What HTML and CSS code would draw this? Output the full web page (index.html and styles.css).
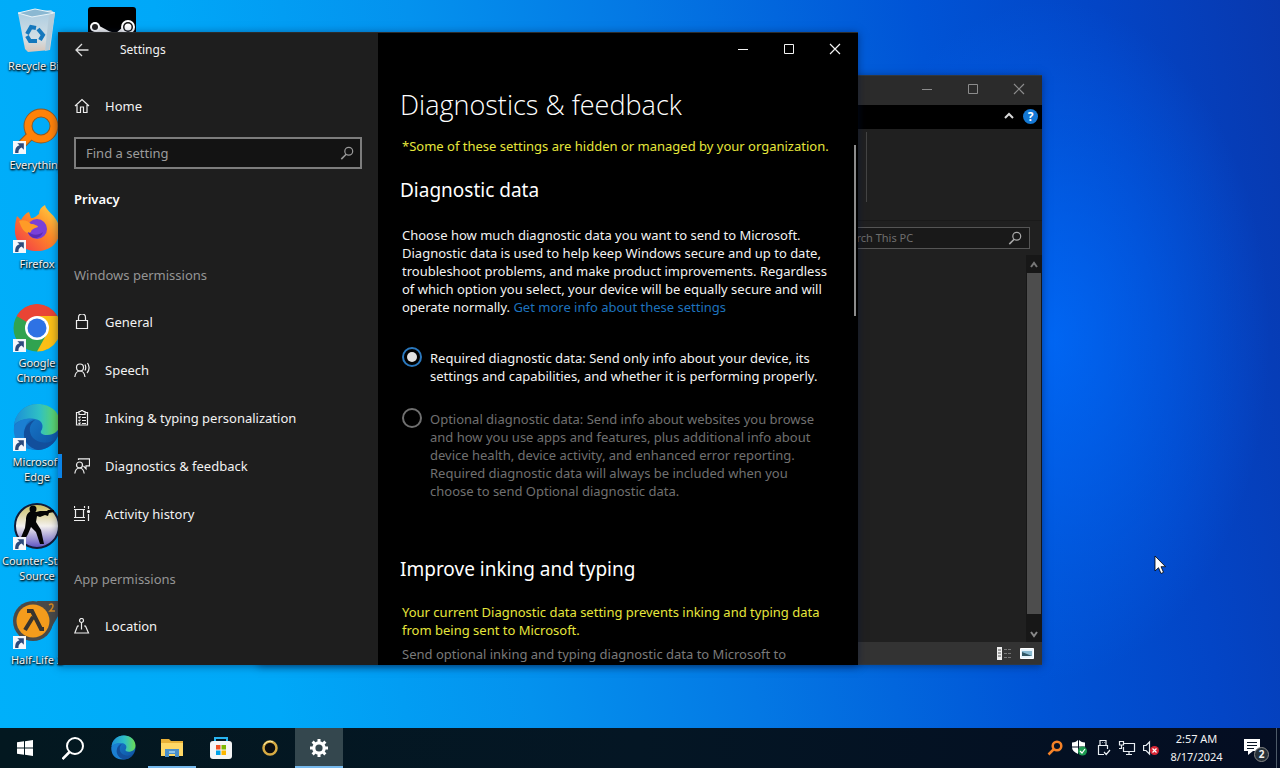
FILE: index.html
```html
<!DOCTYPE html>
<html lang="en">
<head>
<meta charset="utf-8">
<title>Desktop</title>
<link rel="stylesheet" href="styles.css">
</head>
<body>
<svg class="defs" aria-hidden="true">
  <defs>
    <linearGradient id="edgeTop" x1="0" y1="0" x2="1" y2="0"><stop offset="0" stop-color="#1b8fd8"/><stop offset=".55" stop-color="#2fc0c4"/><stop offset="1" stop-color="#6bdc52"/></linearGradient>
    <linearGradient id="edgeLow" x1="0" y1="0" x2="1" y2="1"><stop offset="0" stop-color="#1a86d8"/><stop offset="1" stop-color="#0d4f9e"/></linearGradient>
    <linearGradient id="fox" x1="1" y1="0" x2="0" y2="1"><stop offset="0" stop-color="#ffe14a"/><stop offset=".45" stop-color="#ff8a26"/><stop offset="1" stop-color="#f0304f"/></linearGradient>
    <linearGradient id="bin" x1="0" y1="0" x2="0" y2="1"><stop offset="0" stop-color="#a9cbe0"/><stop offset=".7" stop-color="#d4dfe5"/><stop offset="1" stop-color="#d8c5b8"/></linearGradient>
    <linearGradient id="cs" x1="0" y1="0" x2="0" y2="1"><stop offset="0" stop-color="#c9bd5a"/><stop offset=".5" stop-color="#f4f1ee"/><stop offset="1" stop-color="#5a4fc0"/></linearGradient>
    <symbol id="edge" viewBox="0 0 48 48">
      <circle cx="24" cy="24" r="23" fill="url(#edgeLow)"/>
      <path d="M1 22C3 9 12 1 25 1c13 0 22 9 22 19 0 8-6 12-13 12-5 0-7-2-6-4 3-4 2-11-6-12C13 15 5 17 1 22z" fill="url(#edgeTop)"/>
      <path d="M22 16c-8 0-12 8-9 16 3 8 11 12 20 10-6 5-16 6-23 2C3 40 0 32 1 24c3-7 13-10 21-8z" fill="#1b7fd2"/>
      <path d="M22 17c-6 4-7 12-2 18 6 6 16 6 23 1-4 7-11 11-18 11-10-2-15-10-14-18 1-6 5-11 11-12z" fill="#124f9c"/>
    </symbol>
    <symbol id="shortcut" viewBox="0 0 12 12"><path d="M0 0h12v12H0z" fill="#f4f7fb"/><path d="M4 2h6v6L8 6C6 7 5 8 5 11H2c0-4 1-6 4-7z" fill="#2c4a7c"/></symbol>
    <symbol id="lens" viewBox="0 0 16 16"><circle cx="10" cy="6" r="4.5" fill="none" stroke="currentColor" stroke-width="1.4"/><path d="M7 9.500 1.500 15" stroke="currentColor" stroke-width="1.800"/></symbol>
    <symbol id="x" viewBox="0 0 12 12"><path d="M1 1l10 10M11 1 1 11" stroke="currentColor" stroke-width="1.2"/></symbol>
    <symbol id="max" viewBox="0 0 12 12"><path d="M1.500 1.500h9v9h-9z" fill="none" stroke="currentColor"/></symbol>
    <symbol id="min" viewBox="0 0 12 12"><path d="M1 6.500h10" stroke="currentColor"/></symbol>
  </defs>
</svg>

<main class="desktop">
  <ul class="shortcuts">
    <li><a class="shortcut" href="#">
      <svg class="pic" viewBox="0 0 48 48"><path d="M5 6l33-3 4 3-5 37-22 2-3-3z" fill="url(#bin)"/><path d="M5 6l17-4 20 4-23 4z" fill="#8bb8d2" stroke="#e8f3f8"/><path d="M42 6l-6 37-4 1 4-36z" fill="#b4cbd9"/><g fill="none" stroke="#1478bd" stroke-width="4"><path d="M14 27l4-7 5 1M25 22l5 6-3 5M24 34h-7l-3-5"/></g></svg>
      <span class="name">Recycle Bin</span></a></li>
    <li><a class="shortcut" href="#">
      <svg class="pic" viewBox="0 0 48 48"><circle cx="28" cy="20" r="13" fill="none" stroke="#8a5a28" stroke-width="9"/><path d="M18 29L7 40" stroke="#8a5a28" stroke-width="9"/><circle cx="28" cy="20" r="13" fill="none" stroke="#ff8208" stroke-width="7"/><path d="M19 28L7 40" stroke="#ff8208" stroke-width="7"/><use href="#shortcut" x="0" y="35" width="13" height="13"/></svg>
      <span class="name">Everything</span></a></li>
    <li><a class="shortcut" href="#">
      <svg class="pic" viewBox="0 0 48 48"><path d="M4 11l4 4c2-4 5-7 8-8l2 6c4 0 5-2 8-4 0-4 2-7 6-9 1 6 11 10 14 21 3 14-7 25-22 25S1 36 2 23c0-5 1-8 2-12z" fill="url(#fox)"/><circle cx="24" cy="24" r="10" fill="#7a40d8"/><path d="M6 16c5-2 9 0 12 3 4 0 7 2 7 3-4 1-7 3-7 5-5 3-9-2-12-11z" fill="#ff9b27"/><path d="M15 27c4 3 10 4 15 0-2 7-12 9-15 0z" fill="#5b2bb5"/><use href="#shortcut" x="0" y="35" width="13" height="13"/></svg>
      <span class="name">Firefox</span></a></li>
    <li><a class="shortcut" href="#">
      <svg class="pic" viewBox="0 0 48 48"><circle cx="24" cy="24" r="23.500" fill="#30a350"/><path d="M24 24 3.500 12A23.500 23.500 0 0 1 44.500 12z" fill="#e94435"/><path d="M24 12h20.500A23.500 23.500 0 0 1 24 47.500l10-18z" fill="#fbbf16"/><circle cx="24" cy="24" r="12" fill="#fff"/><circle cx="24" cy="24" r="9.500" fill="#2e72e4"/><use href="#shortcut" x="0" y="35" width="13" height="13"/></svg>
      <span class="name"><span>Google</span> <span>Chrome</span></span></a></li>
    <li><a class="shortcut" href="#">
      <svg class="pic" viewBox="0 0 48 48"><use href="#edge" width="48" height="48"/><use href="#shortcut" x="0" y="35" width="13" height="13"/></svg>
      <span class="name"><span>Microsoft</span> <span>Edge</span></span></a></li>
    <li><a class="shortcut" href="#">
      <svg class="pic" viewBox="0 0 48 48"><circle cx="24" cy="24" r="22" fill="url(#cs)" stroke="#111c38" stroke-width="2"/><circle cx="20" cy="7" r="3.500" fill="#050505"/><path d="M17 9l6 1 4-1 7 0 1-1h6v2l-5 1-1 3-3-1-5 2-3-1-1 6 5 8 3 14h-4l-4-12-5-5-3 7-5 9-4-1 6-14 1-8c0-4 1-7 5-9z" fill="#050505"/><use href="#shortcut" x="0" y="35" width="13" height="13"/></svg>
      <span class="name"><span>Counter-Strike</span> <span>Source</span></span></a></li>
    <li><a class="shortcut" href="#">
      <svg class="pic" viewBox="0 0 48 48"><path d="M24 0h24v10L34 34z" fill="#4a4a48"/><circle cx="20" cy="20" r="20" fill="#4a4a48"/><circle cx="20" cy="20" r="16.500" fill="#f49c1c"/><path d="M14 10h5l9 18h3M20 16l-8 13" fill="none" stroke="#38342e" stroke-width="4"/><path d="M36 4c4-3 6 1 1 6h5" fill="none" stroke="#d68a20" stroke-width="1.500"/><use href="#shortcut" x="0" y="35" width="13" height="13"/></svg>
      <span class="name">Half-Life 2</span></a></li>
    <li><a class="shortcut" href="#">
      <svg class="pic" viewBox="0 0 48 48"><rect width="48" height="48" rx="3" fill="#000"/><path d="M6 20l15 8 8 2 8-7" fill="none" stroke="#f1f1f1" stroke-width="7"/><circle cx="7" cy="20" r="5" fill="#fff"/><circle cx="7" cy="20" r="3" fill="#222"/><circle cx="40" cy="20" r="7" fill="#fff"/><circle cx="40" cy="20" r="5" fill="#111"/><circle cx="40" cy="20" r="3.500" fill="#fff"/></svg>
      <span class="name">Steam</span></a></li>
  </ul>

  <section class="window explorer" aria-label="This PC">
    <header class="ex-title">
      <button class="cap" aria-label="Minimize"><svg><use href="#min"/></svg></button>
      <button class="cap" aria-label="Maximize"><svg><use href="#max"/></svg></button>
      <button class="cap" aria-label="Close"><svg><use href="#x"/></svg></button>
    </header>
    <div class="ex-tabs">
      <button aria-label="Collapse ribbon"><svg width="12" height="12" viewBox="0 0 12 12"><path d="M2 8l4-4 4 4" fill="none" stroke="#d8d8d8" stroke-width="2"/></svg></button>
      <button class="help" aria-label="Help">?</button>
    </div>
    <div class="ex-ribbon"><i></i></div>
    <div class="ex-address">
      <label class="ex-search"><input type="text" aria-label="Search This PC" placeholder="Search This PC"><svg width="14" height="14"><use href="#lens"/></svg></label>
    </div>
    <div class="ex-body">
      <div class="ex-files"></div>
      <div class="ex-scroll">
        <svg width="12" height="18" viewBox="0 0 12 18"><path d="M3 12l3-4 3 4" fill="none" stroke="#777" stroke-width="2"/></svg>
        <i></i>
        <svg width="12" height="28" viewBox="0 0 12 28"><path d="M3 18l3 4 3-4" fill="none" stroke="#888" stroke-width="2"/></svg>
      </div>
    </div>
    <footer class="ex-status">
      <svg width="16" height="14" viewBox="0 0 16 14"><path d="M0 0h5v13H0z" fill="#eee"/><path d="M1 3h3M1 6h3M1 9h3" stroke="#555"/><path d="M7 2.500h8M7 6.500h8M7 10.500h8" stroke="#777" stroke-dasharray="3 1"/></svg>
      <svg width="14" height="12" viewBox="0 0 14 12"><path d="M.5.5h13v10H.5z" fill="#e9f4fb" stroke="#fff"/><path d="M2 3h10v5H2z" fill="#8abbd2"/><path d="M2 8V4l10 4z" fill="#315766"/></svg>
    </footer>
  </section>

  <section class="window settings" aria-label="Settings">
    <nav class="side">
      <header class="side-title"><button aria-label="Back"><svg width="14" height="14" viewBox="0 0 14 14"><path d="M13.500 7H1M7 1 1 7l6 6" fill="none" stroke="#ddd" stroke-width="1.300"/></svg></button><span>Settings</span></header>
      <a class="item home" href="#"><svg viewBox="0 0 16 16"><path d="M1 8l7-6.500L15 8M3 7v7.500h3.500V9h3v5.500H13V7"/></svg>Home</a>
      <label class="find"><input type="text" aria-label="Find a setting" placeholder="Find a setting"><svg width="14" height="14"><use href="#lens"/></svg></label>
      <h2 class="section">Privacy</h2>
      <h3 class="group">Windows permissions</h3>
      <a class="item" href="#"><svg viewBox="0 0 16 16"><path d="M2.500 6.500h11v8h-11zM4.500 6.500V3.500a3.500 3.500 0 0 1 7 0v3"/></svg>General</a>
      <a class="item" href="#"><svg viewBox="0 0 16 16"><circle cx="6" cy="5.500" r="3.500"/><path d="M.8 15c.5-4 2.200-6 5.200-6s4.500 2 5 6M11 2.500c1 2 1 4 0 6M13.500 1c2 3 2 7-.5 10"/></svg>Speech</a>
      <a class="item" href="#"><svg viewBox="0 0 16 16"><path d="M5 2.500H2.500v12.500h11v-12.500H11M5 1.500h1.500L8 0l1.500 1.500H11v3H5zM4.500 7l.8.8L6.500 6.500M8 7.500h4M4.500 10l.8.800L6.500 9.500M8 10.500h4M4.500 13l.8.800 1.200-1.300M8 13.500h4"/></svg>Inking &amp; typing personalization</a>
      <a class="item current" href="#" aria-current="page"><svg viewBox="0 0 16 16"><circle cx="5.500" cy="7" r="3"/><path d="M.8 15.500c.5-3.500 2-5.500 4.700-5.500s4.200 2 4.700 5.500M4.500 2V.8h11v7H12v3L9.500 8"/></svg>Diagnostics &amp; feedback</a>
      <a class="item" href="#"><svg viewBox="0 0 16 16"><path d="M0 3.500h11M0 11.500h11M1.500 3.500v8M9.500 3.500v8M.500 0v2M10.500 0v2M0 14.500h11M14.500 0v3M14.500 8v7"/><circle cx="14.500" cy="5.500" r="1" fill="#eee"/></svg>Activity history</a>
      <h3 class="group second">App permissions</h3>
      <a class="item" href="#"><svg viewBox="0 0 16 16"><circle cx="7.500" cy="2.500" r="2"/><path d="M7.500 4.500v7M5 8H3.500L.8 15h13.700L11.500 8H10"/></svg>Location</a>
    </nav>
    <div class="main">
      <header class="caption">
        <button class="cap" aria-label="Minimize"><svg><use href="#min"/></svg></button>
        <button class="cap" aria-label="Maximize"><svg><use href="#max"/></svg></button>
        <button class="cap" aria-label="Close"><svg><use href="#x"/></svg></button>
      </header>
      <h1>Diagnostics &amp; feedback</h1>
      <div class="scroller">
        <div class="content">
          <p class="warn">*Some of these settings are hidden or managed by your organization.</p>
          <h2>Diagnostic data</h2>
          <p>Choose how much diagnostic data you want to send to Microsoft.<br>Diagnostic data is used to help keep Windows secure and up to date,<br>troubleshoot problems, and make product improvements. Regardless<br>of which option you select, your device will be equally secure and will<br>operate normally. <a href="#">Get more info about these settings</a></p>
          <label class="choice"><input type="radio" name="diag" checked><span>Required diagnostic data: Send only info about your device, its<br>settings and capabilities, and whether it is performing properly.</span></label>
          <label class="choice off"><input type="radio" name="diag" disabled><span>Optional diagnostic data: Send info about websites you browse<br>and how you use apps and features, plus additional info about<br>device health, device activity, and enhanced error reporting.<br>Required diagnostic data will always be included when you<br>choose to send Optional diagnostic data.</span></label>
          <h2 class="later">Improve inking and typing</h2>
          <p class="warn">Your current Diagnostic data setting prevents inking and typing data<br>from being sent to Microsoft.</p>
          <p class="muted">Send optional inking and typing diagnostic data to Microsoft to</p>
        </div>
        <i class="thumb"></i>
      </div>
    </div>
  </section>

  <svg class="cursor" width="12" height="20" viewBox="0 0 12 20"><path d="M1 1v15l3.500-3.300L7 18.500l2.500-1.200L7 11.700h4.500z" fill="#fff" stroke="#000" stroke-width=".8"/></svg>
</main>

<footer class="taskbar">
  <div class="apps">
    <button aria-label="Start"><svg width="16" height="16" viewBox="0 0 16 16"><path d="M0 2.300l7-1v6.200H0zM8 1.200 16 0v7.500H8zM0 8.500h7v6.200l-7-1zM8 8.500h8V16l-8-1.200z" fill="#fff"/></svg></button>
    <button aria-label="Search"><svg width="24" height="24" viewBox="0 0 24 24"><circle cx="13" cy="10" r="8" fill="none" stroke="#fff" stroke-width="2"/><path d="M7.500 16 .500 23" stroke="#fff" stroke-width="2.500"/></svg></button>
    <button aria-label="Microsoft Edge"><svg width="25" height="25"><use href="#edge"/></svg></button>
    <button class="open" aria-label="File Explorer"><svg width="22" height="20" viewBox="0 0 22 20"><path d="M0 1h8l2 2h12v15H0z" fill="#e9b137"/><path d="M0 5h22v13H0z" fill="#ffd866"/><path d="M4 11h14v8h-4v-3H8v3H4z" fill="#4a8fc9"/><path d="M8 14h6" stroke="#8ec4ea" stroke-width="2"/></svg></button>
    <button aria-label="Microsoft Store"><svg width="24" height="24" viewBox="0 0 24 24"><path d="M6 6V2h12v4" fill="none" stroke="#28b4f0" stroke-width="2"/><rect x="1" y="5" width="22" height="18" rx="3" fill="#f4f5f6"/><path d="M7 9h4.500v4.500H7z" fill="#f05022"/><path d="M12.500 9H17v4.500h-4.500z" fill="#7db700"/><path d="M7 14.500h4.500V19H7z" fill="#00a2e8"/><path d="M12.500 14.500H17V19h-4.500z" fill="#fcb700"/></svg></button>
    <button aria-label="Recorder"><svg width="18" height="18" viewBox="0 0 18 18"><circle cx="9" cy="9" r="6.500" fill="#0b0d10" stroke="#d7ab43" stroke-width="2.500"/><path d="M3 6a6.500 6.500 0 0 1 9-3" fill="none" stroke="#fff1b0" stroke-width="1"/></svg></button>
    <button class="open active" aria-label="Settings"><svg width="20" height="20" viewBox="0 0 20 20"><circle cx="10" cy="10" r="5.200" fill="none" stroke="#fff" stroke-width="3.200"/><g stroke="#fff" stroke-width="3"><path d="M10 1v3M10 16v3M1 10h3M16 10h3M3.600 3.600l2.200 2.200M14.200 14.200l2.200 2.200M3.600 16.400l2.200-2.200M14.200 5.800l2.200-2.200"/></g></svg></button>
  </div>
  <div class="tray">
    <button aria-label="Everything"><svg width="16" height="16" viewBox="0 0 16 16"><circle cx="10" cy="6" r="4.300" fill="none" stroke="#f58228" stroke-width="2.500"/><path d="M6.500 9.500 1.500 14.500" stroke="#f58228" stroke-width="2.500"/></svg></button>
    <button aria-label="Security"><svg width="16" height="16" viewBox="0 0 16 16"><path d="M7 0v6.500H1V2.500C4 2.500 6 1 7 0zM8 0c1 1 3 2.500 6 2.500v4H8zM1 7.500h6V14C3 12 1 10 1 7.500zM8 7.500h6C14 10 12 12 8 14z" fill="#fff"/><circle cx="11.500" cy="11" r="4.500" fill="#1b9a50"/><path d="M9 11l2 2 3-4" fill="none" stroke="#fff" stroke-width="1.200"/></svg></button>
    <button aria-label="USB"><svg width="16" height="18" viewBox="0 0 16 18"><path d="M5 6V1.500h6V6M3.500 6.500h9M3.500 6v9.500H9M12.500 6v4M9 13l2.200 2.500L15 11M7 3.500h.5M9 3.500h.5" fill="none" stroke="#e8edf2" stroke-width="1.200"/></svg></button>
    <button aria-label="Network"><svg width="18" height="16" viewBox="0 0 18 16"><path d="M6 3.500h10.500v8H5.500V7M11 11.500V14M8 14.500h6M1.500 1.500h4v3.500h-4zM3.500 5v3.500H1" fill="none" stroke="#e8edf2" stroke-width="1.200"/></svg></button>
    <button aria-label="Volume muted"><svg width="16" height="16" viewBox="0 0 16 16"><path d="M.6 5.500H3L6.500 2v12L3 10.500H.6z" fill="none" stroke="#e8edf2" stroke-width="1.200"/><circle cx="11.500" cy="10.500" r="4.500" fill="#d92635"/><path d="M9.500 8.500l4 4M13.500 8.500l-4 4" stroke="#fff" stroke-width="1.200"/></svg></button>
    <button class="clock"><time>2:57 AM</time><time>8/17/2024</time></button>
    <button class="notes" aria-label="2 notifications"><svg width="18" height="18" viewBox="0 0 18 18"><path d="M0 0h16v12H9l-5 4v-4H0z" fill="#fff"/><path d="M3 3.500h10M3 6.500h10M3 9.500h7" stroke="#0a1726"/></svg><b>2</b></button>
    <button class="peek" aria-label="Show desktop"></button>
  </div>
</footer>
</body>
</html>
```
FILE: styles.css
```css
* { box-sizing: border-box; }
html, body { height: 100%; margin: 0; }
body {
  display: flex; flex-direction: column; overflow: hidden;
  font: 13px/18px "Noto Sans", "Open Sans", sans-serif; color: #f2f2f2;
}
button { padding: 0; border: 0; background: none; color: inherit; font: inherit; display: flex; align-items: center; justify-content: center; }
a { color: inherit; text-decoration: none; }
h1, h2, h3, p, ul { margin: 0; padding: 0; font-weight: 400; }
i { display: block; }
svg { flex: none; }
.defs { position: absolute; width: 0; height: 0; }

.desktop {
  position: relative; flex: 1; min-height: 0; overflow: hidden;
  background:
    radial-gradient(ellipse 220px 340px at 1050px 340px, rgba(0, 110, 255, .75), rgba(0, 100, 255, 0)),
    linear-gradient(80deg, #00b0fa 0%, #00a8f8 20%, #0492ee 38%, #0478e4 54%, #0054d6 74%, #0345c6 87%, #0838ae 100%);
}

/* desktop shortcuts */
.shortcuts { list-style: none; display: flex; flex-direction: column; flex-wrap: wrap; align-content: flex-start; height: 100%; padding-left: 2px; }
.shortcuts li { width: 70px; height: 99px; }
.shortcut { display: flex; flex-direction: column; align-items: center; gap: 3px; padding-top: 7px; font-size: 11px; line-height: 15px; white-space: nowrap; text-shadow: 0 1px 2px #000, 1px 1px 2px #000; }
.shortcut .pic { width: 48px; height: 48px; }
.name { display: flex; flex-direction: column; align-items: safe center; width: 100%; text-align: center; }
.shortcuts li:last-child { position: absolute; left: 77px; top: 0; }

/* windows */
.window { position: absolute; overflow: hidden; box-shadow: 0 1px 8px rgba(0, 20, 60, .5); }
.cap { width: 46px; height: 32px; }
.cap svg { width: 12px; height: 12px; }

.explorer { left: 258px; top: 75px; width: 784px; height: 590px; display: flex; flex-direction: column; background: #202020; border: solid #303840; border-width: 1px 0 1px 1px; }
.ex-title { display: flex; justify-content: flex-end; background: #2b2b2b; color: #8c8c8c; height: 29px; }
.ex-title .cap { height: 26px; }
.ex-tabs { display: flex; justify-content: flex-end; align-items: center; gap: 8px; height: 24px; padding: 0 4px 2px 0; background: #000; }
.help { width: 15px; height: 15px; border-radius: 50%; background: #1478d4; color: #fff; font-weight: 700; font-size: 12px; line-height: 15px; }
.ex-ribbon { height: 92px; padding: 3px 175px 0 0; display: flex; justify-content: flex-end; border-bottom: 1px solid #1a1a1a; }
.ex-ribbon i { width: 1px; height: 70px; background: #444; }
.ex-address { display: flex; justify-content: flex-end; padding: 6px 12px; }
.ex-search { display: flex; align-items: center; width: 203px; height: 22px; padding: 0 7px; border: 1px solid #555; background: #191919; color: #aaa; }
.ex-search input { flex: 1; min-width: 0; padding: 0 0 0 3px; border: 0; background: none; font: 11px/18px "Noto Sans", sans-serif; color: #ddd; }
.ex-search input::placeholder { color: #6e6e6e; opacity: 1; }
.ex-body { flex: 1; min-height: 0; display: flex; }
.ex-files { flex: 1; }
.ex-scroll { width: 16px; display: flex; flex-direction: column; align-items: center; background: #171717; }
.ex-scroll i { flex: 1; width: 14px; background: #4d4d4d; }
.ex-status { display: flex; align-items: center; justify-content: flex-end; gap: 7px; height: 22px; padding: 1px 8px 0 0; background: #333; }

.settings { left: 58px; top: 32px; width: 800px; height: 633px; display: flex; background: #000; border-top: 1px solid #2c2c2c; }
.side { width: 320px; display: flex; flex-direction: column; background: #1e1e1e; overflow: hidden; }
.side-title { display: flex; align-items: center; gap: 31px; padding: 0 17px; height: 33px; font-size: 12px; line-height: 16px; }
.item { display: flex; align-items: center; gap: 15px; height: 48px; padding: 0 16px; }
.item svg { width: 16px; height: 16px; fill: none; stroke: #eee; stroke-width: 1.2; }
.home { margin-top: 16px; }
.find { display: flex; align-items: center; margin: 7px 16px 0; height: 32px; padding: 0 6px 0 10px; border: 2px solid #7d7d7d; background: #131313; color: #999; }
.find input { flex: 1; min-width: 0; padding: 0; border: 0; background: none; font: 13px/18px "Noto Sans", sans-serif; color: #eee; }
.find input::placeholder { color: #9c9c9c; opacity: 1; }
.section { margin: 20px 16px 0; font-size: 13px; font-weight: 600; line-height: 20px; color: #fff; }
.group { margin: 56px 16px 13px; font-size: 13px; line-height: 20px; color: #959595; }
.group.second { margin-top: 31px; }
.current { position: relative; }
.current::before { content: ""; position: absolute; left: 0; top: 12px; width: 4px; height: 24px; background: #0a84e8; }

.main { flex: 1; min-width: 0; display: flex; flex-direction: column; }
.caption { display: flex; justify-content: flex-end; }
.main h1 { margin: 20px 22px 0; font: 300 27px/40px "Open Sans", "Noto Sans", sans-serif; color: #fff; }
.scroller { flex: 1; min-height: 0; display: flex; align-items: flex-start; overflow: hidden; margin-top: 12px; }
.content { flex: 1; min-width: 0; padding: 0 0 0 24px; white-space: nowrap; }
.thumb { width: 2px; height: 171px; margin: 8px 2px 0 0; background: #8c8c8c; }
.content h2 { margin: 21px 0 22px -2px; font: 400 19px/28px "Noto Sans", sans-serif; color: #fff; }
.content .later { margin-top: 55px; margin-bottom: 20px; }
.warn { color: #e6e63c; }
.content a { color: #1e72bd; }
.choice { display: flex; align-items: flex-start; gap: 8px; margin-top: 31px; }
.choice span { padding-top: 2px; }
.choice input { appearance: none; flex: none; width: 20px; height: 20px; margin: 0; border: 2px solid #2a78be; border-radius: 50%; display: grid; place-items: center; }
.choice input:checked::before { content: ""; width: 10px; height: 10px; border-radius: 50%; background: #e0e0e0; }
.choice.off { margin-top: 23px; color: #707070; }
.choice.off input { border-color: #707070; }
.muted { margin-top: 6px; color: #7a7a7a; }

.cursor { position: absolute; left: 1154px; top: 555px; }

/* taskbar */
.taskbar { display: flex; justify-content: space-between; height: 40px; background: linear-gradient(90deg, #031820, #041624 50%, #040d22); }
.apps { display: flex; gap: 1px; padding-left: 1px; }
.apps button { width: 48px; height: 40px; padding-top: 1px; border-bottom: 2px solid transparent; }
.apps .open { border-bottom-color: #76b9ed; }
.apps .active { background-color: #34474e; }
.tray { display: flex; }
.tray button { width: 24px; height: 40px; }
.tray .clock { flex-direction: column; width: 67px; font-size: 11px; line-height: 18px; }
.tray .notes { position: relative; width: 46px; }
.notes b { position: absolute; left: 24px; top: 19px; width: 15px; height: 15px; border: 1px solid #888; border-radius: 50%; background: #263038; font-size: 10px; line-height: 13px; }
.tray .peek { width: 4px; border-left: 1px solid #4d5a68; }
```
